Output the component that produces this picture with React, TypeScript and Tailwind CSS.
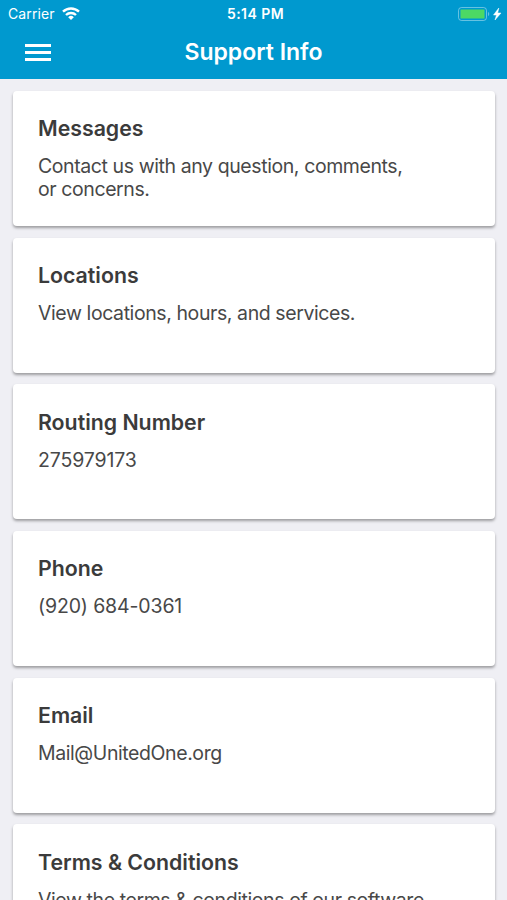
const items = [
  { title: "Messages", lines: ["Contact us with any question, comments,", "or concerns."] },
  { title: "Locations", lines: ["View locations, hours, and services."] },
  { title: "Routing Number", lines: ["275979173"], numeric: true },
  { title: "Phone", lines: ["(920) 684-0361"], numeric: true },
  { title: "Email", lines: ["Mail@UnitedOne.org"] },
  { title: "Terms & Conditions", lines: ["View the terms & conditions of our software."] },
]

function StatusBar() {
  return (
    <div className="grid h-7 grid-cols-[1fr_auto_1fr] items-center pl-2 pr-[5px] text-sm leading-none">
      <div className="flex items-center gap-[7px]">
        <span className="tracking-[0.1px]">Carrier</span>
        <svg className="-mt-0.5" width="18" height="13" viewBox="0 0 18 13" fill="none" stroke="white" strokeWidth="2.4">
          <path d="M1 4.7a11.6 11.6 0 0 1 16 0" />
          <path d="M4 8a7.3 7.3 0 0 1 10 0" />
          <path d="M9 13 6.2 10.2a4 4 0 0 1 5.600 0Z" fill="white" stroke="none" />
        </svg>
      </div>
      <span className="ml-px text-center font-semibold tracking-[0.45px]">5:14 PM</span>
      <div className="flex items-center justify-end">
        <svg className="-mt-px" width="44" height="14" viewBox="0 0 44 14">
          <rect x="0.5" y="0.5" width="28" height="13" rx="3" fill="none" stroke="white" strokeOpacity="0.4" />
          <rect x="2.500" y="2.5" width="24" height="9" rx="0.5" fill="#4cd964" />
          <path d="M30 5c1.6.4 1.6 3.6 0 4Z" fill="white" fillOpacity="0.4" />
          <path d="M40.8 1 35.5 8H38.500L37 13 43 6H39.700Z" fill="white" stroke="white" strokeWidth="0.5" />
        </svg>
      </div>
    </div>
  )
}

export default function App() {
  return (
    <div className="h-[900px] overflow-hidden bg-[#efeff4] font-['Inter',sans-serif]">
      <header className="h-[79px] bg-[#0099cf] text-white">
        <StatusBar />
        <div className="grid h-12 grid-cols-[1fr_auto_1fr] items-center">
          <button type="button" aria-label="Menu" className="ml-[25px] flex w-[26px] flex-col gap-1">
            <span className="h-[3px] bg-white" />
            <span className="h-[3px] bg-white" />
            <span className="h-[3px] bg-white" />
          </button>
          <h1 className="text-[23px] font-semibold">Support Info</h1>
        </div>
      </header>

      <main className="flex flex-col gap-[11.7px] pt-3 pr-3 pl-[13px]">
        {items.map((item) => (
          <section
            key={item.title}
            className="h-[135px] shrink-0 rounded bg-white px-[25px] pt-[23.4px] shadow-[0_2px_3px_rgba(0,0,0,0.35)]"
          >
            <h2 className="text-[21.3px] leading-7 font-semibold text-[#3b3b3b]">{item.title}</h2>
            <p
              className={`mt-[13px] text-[19.5px] leading-[23px] whitespace-nowrap text-[#484848] ${
                item.numeric ? "tracking-[-0.14px]" : "tracking-[-0.41px]"
              }`}
            >
              {item.lines.map((line) => (
                <span key={line} className="block">{line}</span>
              ))}
            </p>
          </section>
        ))}
      </main>
    </div>
  )
}
